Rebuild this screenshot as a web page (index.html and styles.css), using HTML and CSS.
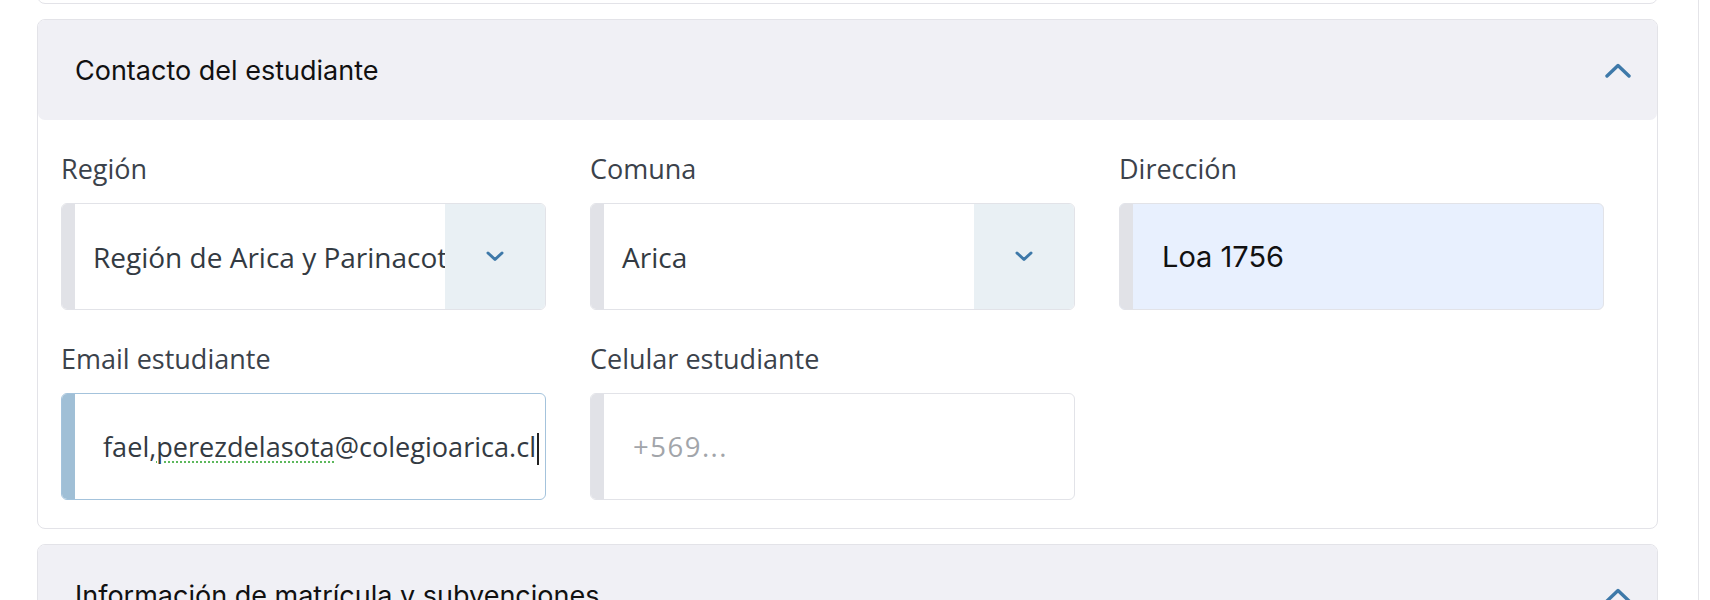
FILE: index.html
```html
<!DOCTYPE html>
<html lang="es">
<head>
<meta charset="utf-8">
<title>Contacto del estudiante</title>
<link rel="stylesheet" href="styles.css">
</head>
<body>
<div class="page">
  <main class="main">
    <section class="card card-cut"></section>

    <section class="card">
      <header class="card-head">
        <h2 class="card-title">Contacto del estudiante</h2>
        <svg class="chev-up" width="26" height="15" viewBox="0 0 26 15"><path d="M2 13 L13 2.5 L24 13" fill="none" stroke="#3e79a9" stroke-width="3.4" stroke-linecap="round" stroke-linejoin="round"/></svg>
      </header>
      <div class="card-body">
        <div class="grid">
          <div class="field">
            <label class="label">Región</label>
            <div class="control select">
              <span class="bar"></span>
              <span class="value">Región de Arica y Parinacota</span>
              <span class="drop"><svg width="18" height="11" viewBox="0 0 18 11"><path d="M2 2 L9 8.5 L16 2" fill="none" stroke="#3e79a9" stroke-width="3" stroke-linecap="round" stroke-linejoin="round"/></svg></span>
            </div>
          </div>
          <div class="field">
            <label class="label">Comuna</label>
            <div class="control select">
              <span class="bar"></span>
              <span class="value">Arica</span>
              <span class="drop"><svg width="18" height="11" viewBox="0 0 18 11"><path d="M2 2 L9 8.5 L16 2" fill="none" stroke="#3e79a9" stroke-width="3" stroke-linecap="round" stroke-linejoin="round"/></svg></span>
            </div>
          </div>
          <div class="field">
            <label class="label">Dirección</label>
            <div class="control text autofill">
              <span class="bar"></span>
              <span class="value auto-value">Loa 1756</span>
            </div>
          </div>
          <div class="field">
            <label class="label">Email estudiante</label>
            <div class="control text focus">
              <span class="bar"></span>
              <span class="value email-value">fael,<span class="spell">perezdelasota</span>@colegioarica.cl<span class="caret"></span></span>
            </div>
          </div>
          <div class="field">
            <label class="label">Celular estudiante</label>
            <div class="control text">
              <span class="bar"></span>
              <span class="value placeholder">+569...</span>
            </div>
          </div>
        </div>
      </div>
    </section>

    <section class="card">
      <header class="card-head">
        <h2 class="card-title">Información de matrícula y subvenciones</h2>
        <svg class="chev-up" width="26" height="15" viewBox="0 0 26 15"><path d="M2 13 L13 2.5 L24 13" fill="none" stroke="#3e79a9" stroke-width="3.4" stroke-linecap="round" stroke-linejoin="round"/></svg>
      </header>
    </section>
  </main>
  <aside class="rail"></aside>
</div>
</body>
</html>
```

FILE: styles.css
```css
* { box-sizing: border-box; }
html, body { margin: 0; padding: 0; }
body {
  background: #ffffff;
  height: 600px;
  overflow: hidden;
  font-family: "Open Sans", "Noto Sans", sans-serif;
}
.page {
  display: flex;
  height: 600px;
}
.main {
  flex: 0 0 1698px;
  padding: 0 40px 0 37px;
  display: flex;
  flex-direction: column;
  gap: 15px;
}
.rail {
  flex: 1;
  border-left: 1px solid #e4e4e8;
}
.card {
  border: 1px solid #e3e3e8;
  border-radius: 8px;
  background: #fff;
  flex-shrink: 0;
}
.card-cut {
  height: 20px;
  margin-top: -16px;
}
.card-head {
  height: 100px;
  background: #f0f0f5;
  border-radius: 7px;
  display: flex;
  align-items: center;
  justify-content: space-between;
  padding: 0 26px 0 37px;
}
.card-title {
  margin: 0;
  font-family: "Inter", "Noto Sans", sans-serif;
  font-weight: 400;
  font-size: 27px;
  color: #111;
}
.chev-up { display: block; }
.card-body {
  padding: 33px 24px 28px 23px;
}
.grid {
  display: grid;
  grid-template-columns: repeat(3, 485px);
  column-gap: 44px;
  row-gap: 33px;
}
.label {
  display: block;
  font-size: 27px;
  line-height: 32px;
  color: #3b424b;
  margin-bottom: 18px;
}
.control {
  height: 107px;
  border: 1px solid #e2e3e8;
  border-radius: 6px;
  overflow: hidden;
  display: flex;
  align-items: center;
  background: #fff;
}
.bar {
  flex: 0 0 13px;
  align-self: stretch;
  background: #e1e2e7;
}
.value {
  flex: 1;
  min-width: 0;
  white-space: nowrap;
  overflow: hidden;
  font-size: 27.5px;
  color: #333a42;
}
.select .value {
  padding-left: 18px;
  font-size: 28px;
}
.text .value { padding-left: 29px; }
.text .email-value {
  font-size: 27.1px;
  padding-left: 28px;
}
.drop {
  flex: 0 0 100px;
  align-self: stretch;
  background: #e9f0f4;
  display: flex;
  align-items: center;
  justify-content: center;
}
.drop svg { display: block; }
.autofill { background: #e8f0fe; }
.auto-value {
  font-family: "Inter", "Noto Sans", sans-serif;
  color: #111;
  font-size: 29px;
}
.focus { border-color: #a4c3dc; }
.focus .bar { background: #a0bfd6; }
.spell {
  text-decoration: underline dotted #5cb85c;
  text-decoration-thickness: 2px;
  text-underline-offset: 5px;
}
.caret {
  display: inline-block;
  width: 2px;
  height: 32px;
  background: #222;
  vertical-align: middle;
  margin-left: 1px;
}
.placeholder {
  color: #a2a5aa;
  letter-spacing: 1.5px;
}
```
